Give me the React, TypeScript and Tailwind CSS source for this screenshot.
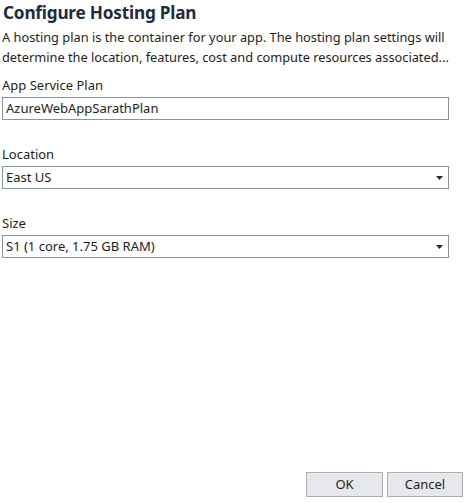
import React from 'react';

const FONT = { fontFamily: '"Noto Sans", "Segoe UI", sans-serif' };

const dotted =
  'bg-white bg-[radial-gradient(#d9dde2_0.6px,transparent_0.7px)] bg-[length:4px_4px]';

function Caret() {
  return (
    <svg width="7" height="4" viewBox="0 0 7 4" className="mr-[3px]">
      <path d="M0 0 H7 L3.5 4 Z" fill="#1e2b3c" />
    </svg>
  );
}

function Field({ label, value, select }: { label: string; value: string; select?: boolean }) {
  return (
    <div className="flex flex-col">
      <div className="h-[22px] text-[13px] leading-[18px] text-[#1e1e1e] pt-[1px]">{label}</div>
      <div
        className={`h-[23px] w-[447px] border border-[#8993a0] ${dotted} flex items-center justify-between pl-[3px] pr-[2px] text-[13px] text-[#1e1e1e]`}
      >
        <span>{value}</span>
        {select && <Caret />}
      </div>
    </div>
  );
}

const App: React.FC = () => {
  return (
    <div className="w-[466px] h-[503px] bg-white flex flex-col pl-[2px]" style={FONT}>
      {/* Header */}
      <div className="text-[17.2px] font-bold leading-[26px] text-[#1e2b3c] pl-[1px] tracking-[-0.2px]">
        Configure Hosting Plan
      </div>
      <p className="text-[12.8px] leading-[20px] text-[#1e1e1e] mt-[1px] whitespace-nowrap">
        A hosting plan is the container for your app. The hosting plan settings will
        <br />
        determine the location, features, cost and compute resources associated...
      </p>

      <div className="flex flex-col gap-[24px] mt-[8px]">
        <Field label="App Service Plan" value="AzureWebAppSarathPlan" />
        <Field label="Location" value="East US" select />
        <Field label="Size" value="S1 (1 core, 1.75 GB RAM)" select />
      </div>

      <div className="flex-1" />

      {/* Footer buttons */}
      <div className="flex justify-end gap-[4px] pr-[3px] pb-[6px]">
        <button className="w-[77px] h-[25px] bg-[#e7e7ee] border border-[#adadad] text-[13px] text-[#1e1e1e]">
          OK
        </button>
        <button className="w-[76px] h-[25px] bg-[#e7e7ee] border border-[#adadad] text-[13px] text-[#1e1e1e]">
          Cancel
        </button>
      </div>
    </div>
  );
};

export default App;
